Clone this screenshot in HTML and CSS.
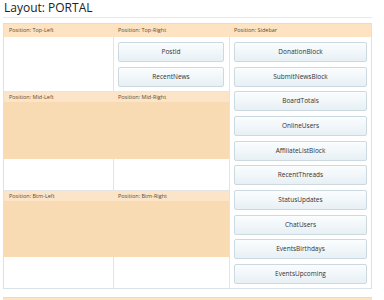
FILE: index.html
```html
<!DOCTYPE html>
<html lang="en">
<head>
  <meta charset="UTF-8">
  <meta name="viewport" content="width=device-width, initial-scale=1.0">
  <title>Layout: PORTAL</title>
  <link rel="stylesheet" href="styles.css">
</head>
<body>
  <div class="page">
    <h2 class="title">Layout: PORTAL</h2>

    <div class="layout">
      <!-- header row -->
      <div class="pos-head">Position: Top-Left</div>
      <div class="pos-head">Position: Top-Right</div>
      <div class="pos-head">Position: Sidebar</div>

      <!-- sidebar -->
      <div class="sidebar">
        <div class="block">DonationBlock</div>
        <div class="block">SubmitNewsBlock</div>
        <div class="block">BoardTotals</div>
        <div class="block">OnlineUsers</div>
        <div class="block">AffiliateListBlock</div>
        <div class="block">RecentThreads</div>
        <div class="block">StatusUpdates</div>
        <div class="block">ChatUsers</div>
        <div class="block">EventsBirthdays</div>
        <div class="block">EventsUpcoming</div>
      </div>

      <!-- top -->
      <div class="slot slot-left"></div>
      <div class="slot slot-right">
        <div class="block">PostId</div>
        <div class="block">RecentNews</div>
      </div>

      <!-- mid -->
      <div class="zone"><span class="zone-label">Position: Mid-Left</span></div>
      <div class="zone"><span class="zone-label">Position: Mid-Right</span></div>
      <div class="slot slot-left"></div>
      <div class="slot"></div>

      <!-- bottom -->
      <div class="zone"><span class="zone-label">Position: Btm-Left</span></div>
      <div class="zone"><span class="zone-label">Position: Btm-Right</span></div>
      <div class="slot slot-left slot-last"></div>
      <div class="slot slot-last"></div>
    </div>

    <div class="next-section"></div>
  </div>
</body>
</html>
```

FILE: styles.css
```css
body {
  margin: 0;
  background: #fff;
  font-family: "Open Sans", "DejaVu Sans", sans-serif;
}
.page {
  width: 369px;
  margin-left: 3px;
}
.title {
  margin: 0 0 5px;
  padding: 0 1px 1px;
  font-size: 12px;
  font-weight: normal;
  line-height: 16px;
  color: #222;
  border-bottom: 1px solid #e8e8e8;
}
.layout {
  display: grid;
  grid-template-columns: 110px 115px 142px;
  grid-template-rows: 13px 54px 68px 31px 67px auto;
  border: 1px solid #d9e3e7;
  border-top-color: #f4d9b4;
}
.pos-head {
  background: #fde3c2;
  color: #5e4c33;
  font-size: 5.5px;
  line-height: 12px;
  padding-left: 5px;
  white-space: nowrap;
}
.pos-head:nth-child(2) {
  padding-left: 4px;
}
.zone {
  background: linear-gradient(#fce4c8 0, #fce4c8 10px, #f9dbb3 10px);
  border-top: 1px solid #e3e6e4;
  color: #5e4c33;
  font-size: 5.5px;
  line-height: 8px;
  padding: 1px 5px 0;
  white-space: nowrap;
}
.zone:nth-of-type(even) {
  padding-left: 4px;
}
.slot {
  background: #fff;
}
.slot-left {
  border-right: 1px solid #dce5e9;
}
.slot-right {
  padding: 5px 5px 0 4px;
}
.sidebar {
  grid-column: 3;
  grid-row: 2 / 7;
  border-left: 1px solid #dce5e9;
  padding: 5px 4px 4px;
  background: #fff;
}
.block {
  box-sizing: border-box;
  height: 20px;
  margin-bottom: 4.67px;
  border: 1px solid #cdd9e0;
  border-radius: 2px;
  background: linear-gradient(#fbfdfe, #e7f0f5);
  color: #333;
  font-size: 6.5px;
  line-height: 18px;
  text-align: center;
}
.block:last-child {
  margin-bottom: 0;
}
.next-section {
  margin-top: 8px;
  height: 6px;
  background: #fce3c2;
  border-top: 1px solid #f4d9b4;
}
```
